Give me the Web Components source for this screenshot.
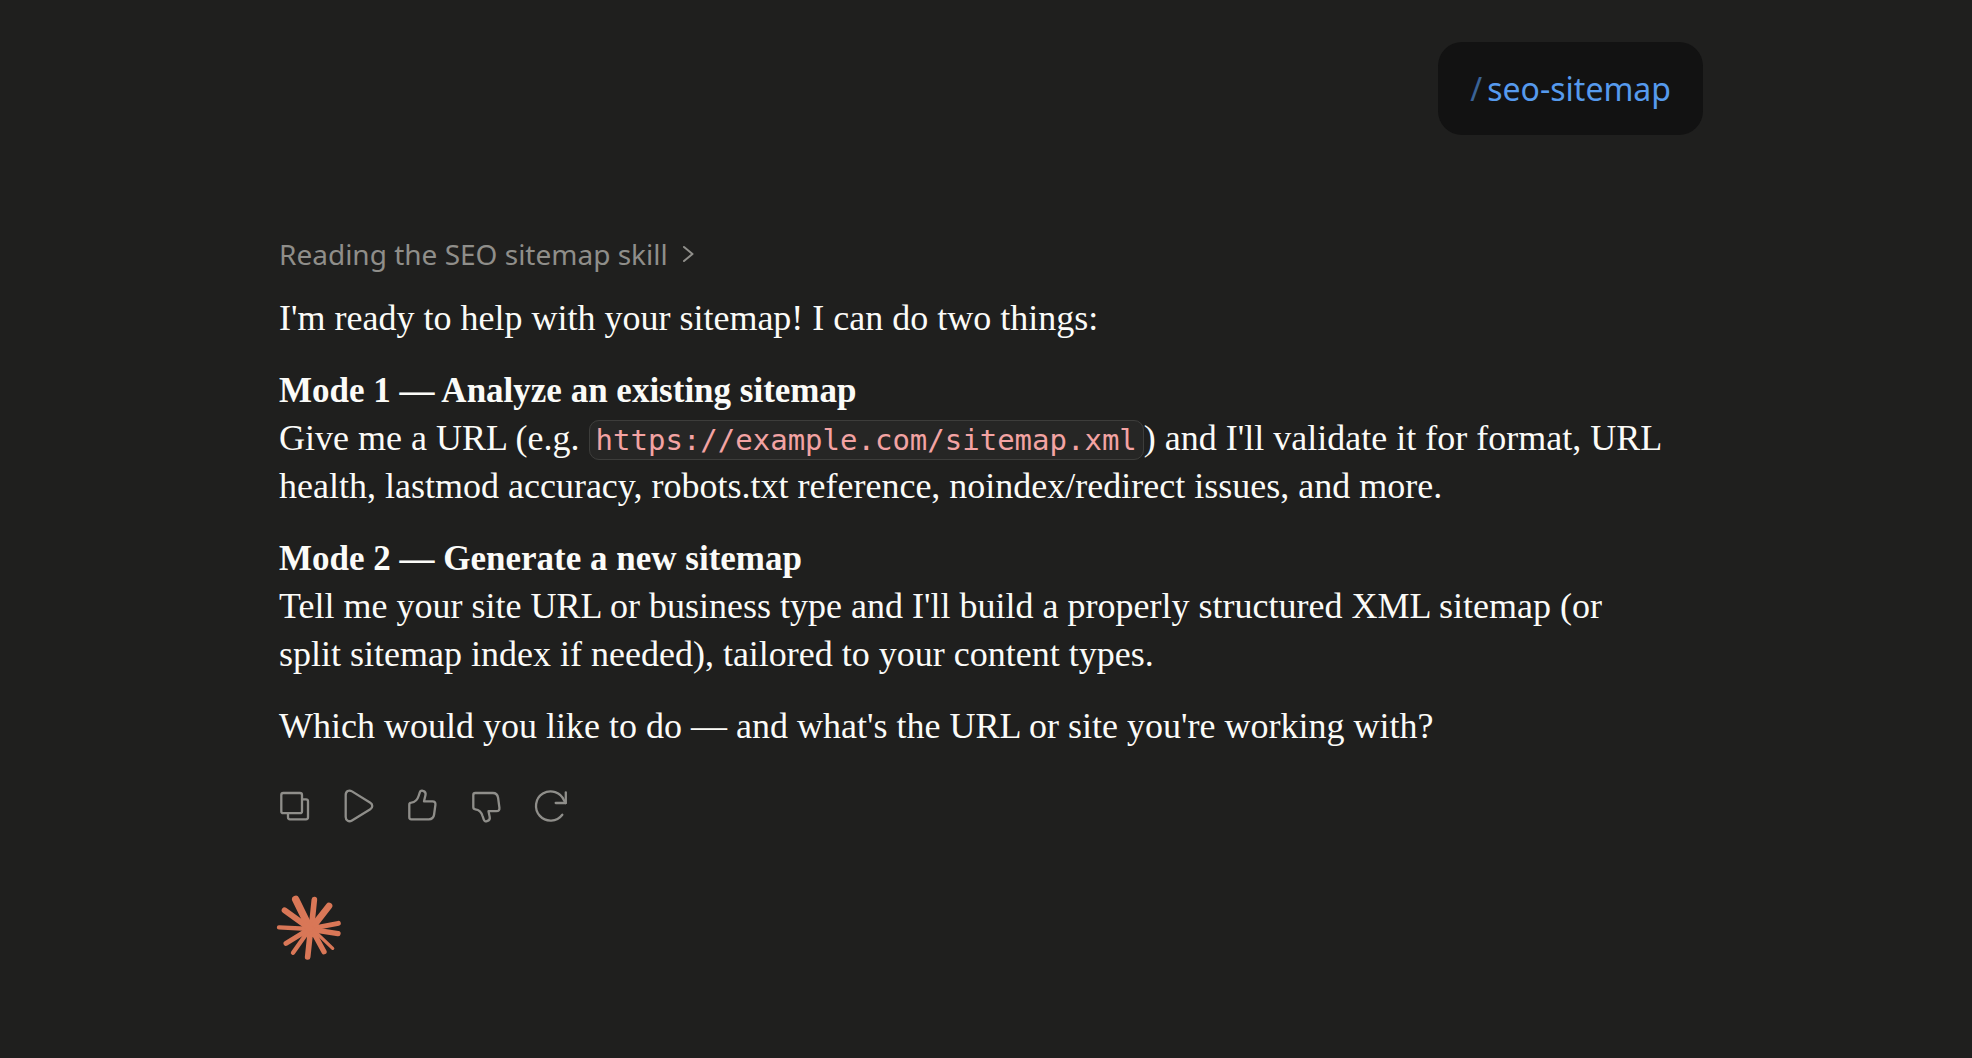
<!DOCTYPE html>
<html lang="en">
<head>
<meta charset="utf-8">
<meta name="viewport" content="width=device-width, initial-scale=1">
<title>seo-sitemap</title>
<style>
  :root {
    --bg: #1f1f1e;
    --bubble: #121212;
    --text: #fbfbf8;
    --muted: #8f8e8a;
    --link: #569aed;
    --code: #f3a3a3;
    --clay: #d97757;
    --sans: "Noto Sans", "Open Sans", sans-serif;
    --serif: "Liberation Serif", "Times New Roman", serif;
    --mono: "DejaVu Sans Mono", monospace;
  }

  body {
    margin: 0;
    min-height: 100vh;
    background: var(--bg);
    color: var(--text);
  }

  strong {
    font-size: 35px;
    line-height: 1;
  }
</style>
</head>
<body>
<chat-thread>
  <user-message command="seo-sitemap"></user-message>
  <assistant-message>
    <skill-step slot="step">Reading the SEO sitemap skill</skill-step>
    <p>I'm ready to help with your sitemap! I can do two things:</p>
    <p><strong>Mode 1 — Analyze an existing sitemap</strong><br>
      Give me a URL (e.g. <inline-code>https://example.com/sitemap.xml</inline-code>) and I'll validate it for format, URL health, lastmod accuracy, robots.txt reference, noindex/redirect issues, and more.</p>
    <p><strong>Mode 2 — Generate a new sitemap</strong><br>
      Tell me your site URL or business type and I'll build a properly structured XML sitemap (or split sitemap index if needed), tailored to your content types.</p>
    <p>Which would you like to do — and what's the URL or site you're working with?</p>
    <message-actions slot="actions"></message-actions>
  </assistant-message>
  <spark-logo></spark-logo>
</chat-thread>

<script>
const define = (name, html, setup) => {
  const template = document.createElement("template");
  template.innerHTML = html.trim();

  customElements.define(
    name,
    class extends HTMLElement {
      connectedCallback() {
        if (this.shadowRoot) return;
        this.attachShadow({ mode: "open" });
        this.shadowRoot.appendChild(template.content.cloneNode(true));
        if (setup) setup(this, this.shadowRoot);
      }
    }
  );
};

define("chat-thread", /* HTML */ `
  <style>
    :host {
      display: block;
      padding: 42px 24px 96px 34px;
    }
    main {
      display: flex;
      flex-direction: column;
      max-width: 1424px;
      margin: 0 auto;
    }
  </style>
  <main><slot></slot></main>
`);

define("user-message", /* HTML */ `
  <style>
    :host {
      display: flex;
      gap: 5px;
      align-self: flex-end;
      padding: 24px 32px;
      border-radius: 24px;
      background: var(--bubble);
      color: var(--link);
      font: 32px/45px var(--sans);
    }
    .slash {
      opacity: 0.6;
    }
  </style>
  <span class="slash">/</span><span data-command></span>
`, (host, root) => {
  root.querySelector("[data-command]").textContent = host.getAttribute("command");
});

define("assistant-message", /* HTML */ `
  <style>
    :host {
      display: block;
      margin-top: 95px;
      padding-right: 38px;
      font: 36px/48px var(--serif);
    }
    .body {
      display: flex;
      flex-direction: column;
      gap: 24px;
      margin-top: 16px;
    }
    ::slotted(p) {
      margin: 0;
    }
  </style>
  <slot name="step"></slot>
  <div class="body"><slot></slot></div>
  <slot name="actions"></slot>
`);

define("skill-step", /* HTML */ `
  <style>
    :host {
      display: block;
    }
    button {
      display: flex;
      align-items: center;
      gap: 12px;
      padding: 0;
      border: 0;
      background: none;
      color: var(--muted);
      font: 28px/48px var(--sans);
      cursor: pointer;
    }
    svg {
      width: 16px;
      height: 20px;
      fill: none;
      stroke: currentColor;
      stroke-width: 2;
      stroke-linecap: round;
      stroke-linejoin: round;
    }
  </style>
  <button type="button" aria-expanded="false">
    <slot></slot>
    <svg viewBox="0 0 16 20" aria-hidden="true"><path d="M4 3l8.500 7L4 17"/></svg>
  </button>
`);

// No whitespace around the slot: it would show up inside the sentence.
define("inline-code", /* HTML */ `
  <style>
    :host {
      display: inline;
      line-height: 1;
    }
    code {
      padding: 2px 6px;
      border: 1px solid #3d3d3b;
      border-radius: 10px;
      background: #262625;
      color: var(--code);
      font: 29px/1 var(--mono);
    }
  </style><code><slot></slot></code>
`);

define("message-actions", /* HTML */ `
  <style>
    :host {
      display: flex;
      margin: 24px 0 0 -16px;
      color: var(--muted);
    }
    button {
      width: 64px;
      height: 64px;
      padding: 0;
      border: 0;
      background: none;
      color: inherit;
      cursor: pointer;
    }
    svg {
      display: block;
      width: 64px;
      height: 64px;
      fill: none;
      stroke: currentColor;
      stroke-width: 2.3;
      stroke-linecap: round;
      stroke-linejoin: round;
    }
  </style>
  <button type="button" aria-label="Copy">
    <svg viewBox="0 0 64 64">
      <rect x="18.300" y="19" width="20.700" height="20.200" rx="2"/>
      <path d="M39.500 25.300H43a2 2 0 0 1 2 2v16a2 2 0 0 1-2 2H27a2 2 0 0 1-2-2v-4"/>
    </svg>
  </button>
  <button type="button" aria-label="Read aloud">
    <svg viewBox="0 0 64 64">
      <path d="M18.700 21C18.700 17 22 15.500 25 17.400L43.300 28.700C45.900 30.300 45.900 33.700 43.300 35.300L25 46.400C22 48.300 18.700 46.800 18.700 43Z"/>
    </svg>
  </button>
  <button type="button" aria-label="Good response">
    <svg viewBox="0 0 64 64">
      <path d="M18.300 30.700c0-1.200.8-1.900 2-2 4-.5 6.200-3 7.300-6.700l1.200-3.600c.5-1.500 1.800-2 3.200-1.500 2.200.7 3 2 2.500 4.200L33 27.300h8.500c2.200 0 3.200 1.300 2.900 3.500l-1.300 9.700c-.5 3.300-2.300 4.800-5.300 4.800H20.300c-1.300 0-2-.7-2-2z"/>
    </svg>
  </button>
  <button type="button" aria-label="Bad response">
    <svg viewBox="0 0 64 64">
      <path d="M18.300 33.300c0 1.300.8 1.900 2 2 4 .5 6.200 3 7.300 6.800l1.200 3.600c.5 1.500 1.800 2 3.200 1.500 2.200-.7 3.200-2 2.700-4.200l-1.200-5.800H41.500c2.200 0 3.200-1.300 2.900-3.500l-1.300-9.900c-.5-3.300-2.300-4.800-5.300-4.800H20.300c-1.300 0-2 .7-2 2z"/>
    </svg>
  </button>
  <button type="button" aria-label="Retry">
    <svg viewBox="0 0 64 64">
      <path d="M43.300 40.700A14.600 14.600 0 1 1 45.200 26.700L46.600 29"/>
      <path d="M46.800 18.300V29H36.700"/>
    </svg>
  </button>
`);

define("spark-logo", /* HTML */ `
  <style>
    :host {
      display: block;
      margin-top: 57px;
      margin-left: -3px;
    }
    svg {
      display: block;
      width: 66px;
      height: 66px;
      fill: none;
      stroke: var(--clay);
      stroke-linecap: round;
    }
  </style>
  <svg viewBox="48 46 198 198" role="img" aria-label="Assistant">
    <circle cx="152" cy="147" r="26" fill="var(--clay)" stroke="none"/>
    <path stroke-width="22" d="M150 147L107 59"/>
    <path stroke-width="17" d="M154 147L163 60"/>
    <path stroke-width="20" d="M154 147L207 79"/>
    <path stroke-width="15" d="M152 147L235 131"/>
    <path stroke-width="16" d="M152 149L234 162"/>
    <path stroke-width="10" d="M156 147L218 206"/>
    <path stroke-width="16" d="M156 150L192 216"/>
    <path stroke-width="17" d="M152 147L143 232"/>
    <path stroke-width="13" d="M150 147L99 219"/>
    <path stroke-width="15" d="M150 147L78 191"/>
    <path stroke-width="13" d="M152 148L57 143"/>
    <path stroke-width="18" d="M150 147L74 92"/>
  </svg>
`);
</script>
</body>
</html>
